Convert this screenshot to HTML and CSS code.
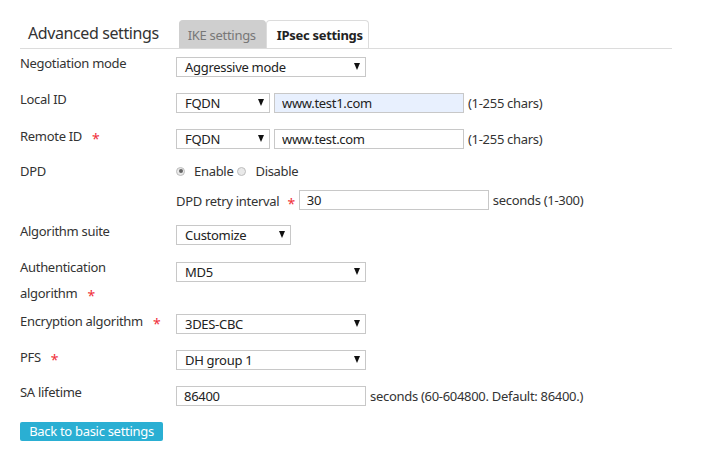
FILE: index.html
```html
<!DOCTYPE html>
<html>
<head>
<meta charset="utf-8">
<link rel="stylesheet" href="styles.css">
</head>
<body>
<div class="page">
  <div class="header">
    <div class="title">Advanced settings</div>
    <div class="tabs">
      <div class="tab tab-off">IKE settings</div>
      <div class="tab tab-on">IPsec settings</div>
    </div>
  </div>
  <div class="form">
    <div class="row">
      <div class="label">Negotiation mode</div>
      <div class="ctrl"><div class="select w190"><span>Aggressive mode</span><i class="arrow"></i></div></div>
    </div>
    <div class="row">
      <div class="label">Local ID</div>
      <div class="ctrl">
        <div class="select w94"><span>FQDN</span><i class="arrow"></i></div>
        <input class="input w190 filled" type="text" value="www.test1.com">
        <span class="hint">(1-255 chars)</span>
      </div>
    </div>
    <div class="row">
      <div class="label">Remote ID<span class="star">*</span></div>
      <div class="ctrl">
        <div class="select w94"><span>FQDN</span><i class="arrow"></i></div>
        <input class="input w190" type="text" value="www.test.com">
        <span class="hint">(1-255 chars)</span>
      </div>
    </div>
    <div class="row row-dpd">
      <div class="label">DPD</div>
      <div class="ctrl-col">
        <div class="radios">
          <span class="radio checked"></span><span class="rlabel">Enable</span>
          <span class="radio"></span><span class="rlabel">Disable</span>
        </div>
        <div class="subrow">
          <span class="sublabel">DPD retry interval<span class="star">*</span></span>
          <input class="input w190" type="text" value="30">
          <span class="hint">seconds (1-300)</span>
        </div>
      </div>
    </div>
    <div class="row">
      <div class="label">Algorithm suite</div>
      <div class="ctrl"><div class="select w115"><span>Customize</span><i class="arrow"></i></div></div>
    </div>
    <div class="row">
      <div class="label"><span class="line">Authentication</span><span class="line">algorithm<span class="star">*</span></span></div>
      <div class="ctrl ctrl-auth"><div class="select w190"><span>MD5</span><i class="arrow"></i></div></div>
    </div>
    <div class="row">
      <div class="label">Encryption algorithm<span class="star">*</span></div>
      <div class="ctrl"><div class="select w190"><span>3DES-CBC</span><i class="arrow"></i></div></div>
    </div>
    <div class="row">
      <div class="label">PFS<span class="star">*</span></div>
      <div class="ctrl"><div class="select w190"><span>DH group 1</span><i class="arrow"></i></div></div>
    </div>
    <div class="row">
      <div class="label">SA lifetime</div>
      <div class="ctrl">
        <input class="input w190" type="text" value="86400">
        <span class="hint">seconds (60-604800. Default: 86400.)</span>
      </div>
    </div>
    <div class="btnrow">
      <button class="btn" type="button">Back to basic settings</button>
    </div>
  </div>
</div>
</body>
</html>
```
FILE: styles.css
```css
* { box-sizing: border-box; }
body {
  margin: 0;
  background: #fff;
  font-family: "Noto Sans", "Open Sans", sans-serif;
  font-size: 13px;
  letter-spacing: -0.3px;
  color: #333;
}
.page {
  width: 672px;
  padding-left: 20px;
}
.header {
  display: flex;
  align-items: flex-end;
  height: 49px;
  border-bottom: 1px solid #dcdcdc;
}
.title {
  font-size: 16px;
  letter-spacing: -0.4px;
  color: #333;
  padding-left: 8px;
  line-height: 20px;
  margin-bottom: 5px;
}
.tabs {
  display: flex;
  margin-left: 20px;
}
.tab {
  height: 28px;
  line-height: 29px;
  font-size: 13px;
  border: 1px solid #dcdcdc;
  border-bottom: none;
  border-radius: 4px 4px 0 0;
}
.tab-off {
  width: 87px;
  background: #cfcfcf;
  color: #777;
  padding-left: 8px;
  border-color: #cfcfcf;
}
.tab-on {
  width: 103px;
  background: #fff;
  color: #222;
  font-weight: bold;
  padding-left: 10px;
}
.form {
  padding-top: 2px;
}
.row {
  display: grid;
  grid-template-columns: 156px 1fr;
  min-height: 36px;
}
.label {
  line-height: 25px;
  padding-bottom: 2px;
}
.line { display: block; }
.star {
  color: #f0303a;
  font-size: 14px;
  margin-left: 10px;
  position: relative;
  top: 3px;
}
.ctrl {
  padding-top: 6px;
  display: flex;
  align-items: center;
  align-self: start;
  gap: 4px;
}
.ctrl-auth { padding-top: 7px; }
.select {
  position: relative;
  height: 20px;
  border: 1px solid #c8c8c8;
  background: #fff;
  line-height: 18px;
  padding-left: 8px;
  color: #222;
}
.arrow {
  position: absolute;
  right: 5px;
  top: 5px;
  width: 0;
  height: 0;
  border-left: 3px solid transparent;
  border-right: 3px solid transparent;
  border-top: 7px solid #111;
}
.w190 { width: 190px; }
.w94 { width: 94px; }
.w115 { width: 115px; }
.input {
  height: 20px;
  border: 1px solid #c8c8c8;
  padding: 0 7px;
  font-family: inherit;
  font-size: 13px;
  letter-spacing: -0.3px;
  color: #222;
  background: #fff;
  outline: none;
  margin: 0;
}
.input.filled { background: #e8f0fe; }
.hint { color: #333; }
.ctrl-col {
  display: flex;
  flex-direction: column;
  padding-bottom: 9px;
}
.radios {
  display: flex;
  align-items: center;
  height: 24px;
}
.radio {
  display: inline-block;
  width: 9px;
  height: 9px;
  border-radius: 50%;
  border: 1px solid #bdbdbd;
  background: #e9e9e9;
  position: relative;
  margin-right: 9px;
}
.radio.checked::after {
  content: "";
  position: absolute;
  left: 1.5px;
  top: 1.5px;
  width: 4px;
  height: 4px;
  border-radius: 50%;
  background: #666;
}
.rlabel { margin-right: 4px; }
.subrow {
  display: flex;
  align-items: center;
  gap: 4px;
  padding-top: 7px;
}
.subrow .star { margin-left: 8px; }
.btnrow {
  padding-top: 6px;
}
.btn {
  height: 19px;
  width: 143px;
  padding: 0;
  border: none;
  border-radius: 2px;
  background: #2aafd3;
  color: #fff;
  font-family: inherit;
  font-size: 13px;
  letter-spacing: -0.3px;
  line-height: 19px;
}
```
